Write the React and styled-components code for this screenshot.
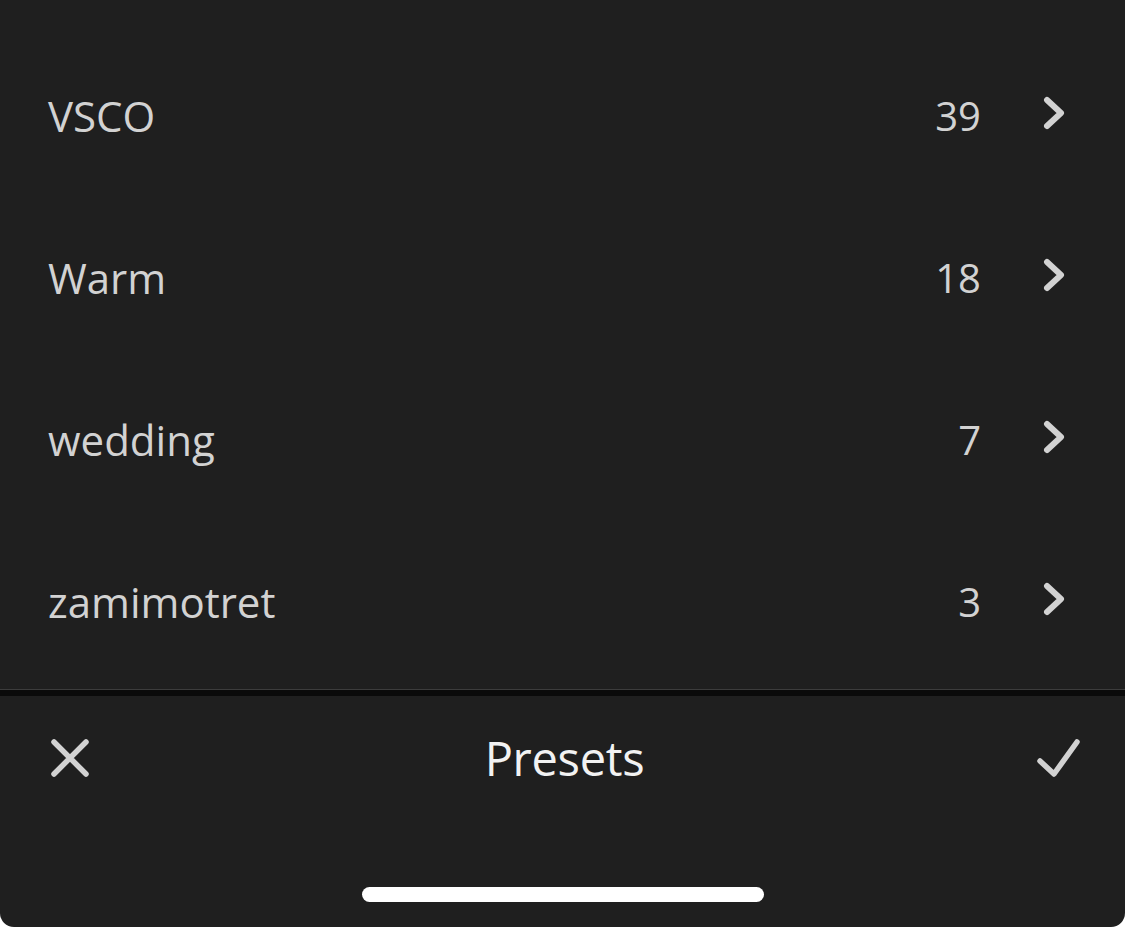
import React from "react";
import styled, { createGlobalStyle } from "styled-components";

const GlobalStyle = createGlobalStyle`
  html, body {
    margin: 0;
    padding: 0;
    background: #ffffff;
  }
  body {
    font-family: "Open Sans", "Noto Sans", sans-serif;
  }
`;

const Screen = styled.div`
  width: 1125px;
  height: 927px;
  background: #1f1f1f;
  border-radius: 0 0 14px 14px;
  overflow: hidden;
  display: flex;
  flex-direction: column;
`;

const List = styled.div`
  padding-top: 35px;
  height: 689px;
  box-sizing: border-box;
  flex-shrink: 0;
`;

const Row = styled.div`
  height: 162px;
  display: flex;
  align-items: center;
  padding: 0 58px 0 48px;
  color: #d2d2d2;
`;

const Name = styled.span`
  flex: 1;
  font-size: 42px;
  line-height: 1;
`;

const Count = styled.span`
  font-size: 40px;
  line-height: 1;
  margin-right: 62px;
`;

const ChevronWrap = styled.span`
  display: flex;
  margin-top: -6px;
`;

const Divider = styled.div`
  height: 7px;
  flex-shrink: 0;
  background: #0a0a0a;
  border-top: 1px solid #3c3c3c;
  box-sizing: border-box;
`;

const Bar = styled.div`
  flex: 1;
  display: flex;
  flex-direction: column;
`;

const Toolbar = styled.div`
  height: 124px;
  display: flex;
  align-items: center;
  justify-content: space-between;
  padding: 0 44px 0 48px;
`;

const Title = styled.span`
  font-size: 47px;
  color: #f2f2f2;
  line-height: 1;
  letter-spacing: -0.3px;
`;

const IconBtn = styled.div`
  width: 44px;
  height: 44px;
  display: flex;
  align-items: center;
  justify-content: center;
`;

const HomeArea = styled.div`
  flex: 1;
  display: flex;
  justify-content: center;
  align-items: flex-end;
  padding-bottom: 25px;
`;

const HomeIndicator = styled.div`
  width: 402px;
  height: 15px;
  border-radius: 8px;
  background: #ffffff;
`;

const Chevron = () => (
  <svg width="24" height="34" viewBox="0 0 24 34">
    <path
      d="M4 4 L18 17 L4 30"
      fill="none"
      stroke="#d2d2d2"
      strokeWidth="6"
      strokeLinecap="round"
      strokeLinejoin="round"
    />
  </svg>
);

const CloseIcon = () => (
  <svg width="40" height="40" viewBox="0 0 40 40">
    <path
      d="M4 4 L36 36 M36 4 L4 36"
      stroke="#d2d2d2"
      strokeWidth="5.5"
      strokeLinecap="round"
    />
  </svg>
);

const CheckIcon = () => (
  <svg width="44" height="40" viewBox="0 0 44 40">
    <path
      d="M3 23 L17 36 L40 4"
      fill="none"
      stroke="#d2d2d2"
      strokeWidth="5.5"
      strokeLinecap="round"
      strokeLinejoin="round"
    />
  </svg>
);

const presets = [
  { name: "VSCO", count: 39 },
  { name: "Warm", count: 18 },
  { name: "wedding", count: 7 },
  { name: "zamimotret", count: 3 },
];

export default function App() {
  return (
    <>
      <GlobalStyle />
      <Screen>
        <List>
          {presets.map((p) => (
            <Row key={p.name}>
              <Name>{p.name}</Name>
              <Count>{p.count}</Count>
              <ChevronWrap>
                <Chevron />
              </ChevronWrap>
            </Row>
          ))}
        </List>
        <Divider />
        <Bar>
          <Toolbar>
            <IconBtn>
              <CloseIcon />
            </IconBtn>
            <Title>Presets</Title>
            <IconBtn>
              <CheckIcon />
            </IconBtn>
          </Toolbar>
          <HomeArea>
            <HomeIndicator />
          </HomeArea>
        </Bar>
      </Screen>
    </>
  );
}
